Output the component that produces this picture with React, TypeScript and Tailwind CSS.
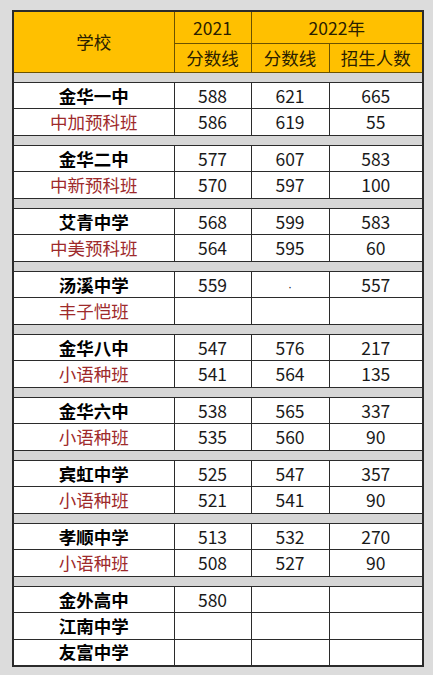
import React from 'react';

type Row = { name: string; a?: string; b?: string; c?: string; sub?: boolean };

const groups: Row[][] = [
  [
    { name: '金华一中', a: '588', b: '621', c: '665' },
    { name: '中加预科班', a: '586', b: '619', c: '55', sub: true },
  ],
  [
    { name: '金华二中', a: '577', b: '607', c: '583' },
    { name: '中新预科班', a: '570', b: '597', c: '100', sub: true },
  ],
  [
    { name: '艾青中学', a: '568', b: '599', c: '583' },
    { name: '中美预科班', a: '564', b: '595', c: '60', sub: true },
  ],
  [
    { name: '汤溪中学', a: '559', b: '·', c: '557' },
    { name: '丰子恺班', sub: true },
  ],
  [
    { name: '金华八中', a: '547', b: '576', c: '217' },
    { name: '小语种班', a: '541', b: '564', c: '135', sub: true },
  ],
  [
    { name: '金华六中', a: '538', b: '565', c: '337' },
    { name: '小语种班', a: '535', b: '560', c: '90', sub: true },
  ],
  [
    { name: '宾虹中学', a: '525', b: '547', c: '357' },
    { name: '小语种班', a: '521', b: '541', c: '90', sub: true },
  ],
  [
    { name: '孝顺中学', a: '513', b: '532', c: '270' },
    { name: '小语种班', a: '508', b: '527', c: '90', sub: true },
  ],
  [
    { name: '金外高中', a: '580' },
    { name: '江南中学' },
    { name: '友富中学' },
  ],
];

const cell = 'border border-[#2b2b2b] p-0 text-center';

export default function App() {
  return (
    <div
      className="min-h-screen bg-[#dcdcdc] pt-[10px] pl-[12px]"
      style={{ fontFamily: '"Noto Sans CJK SC", "Noto Sans", sans-serif' }}
    >
      <table className="w-[410px] border-collapse border-2 border-[#2b2b2b] table-fixed text-[17.5px] leading-none text-[#1a1a1a]">
        <colgroup>
          <col className="w-[161px]" />
          <col className="w-[77px]" />
          <col className="w-[78px]" />
          <col className="w-[94px]" />
        </colgroup>
        <thead className="bg-[#ffc000] text-[#2a2000]">
          <tr className="h-[32px]">
            <th rowSpan={2} className={`${cell} border-[#6b5200] font-normal`}>学校</th>
            <th className={`${cell} border-[#6b5200] font-normal`}>2021</th>
            <th colSpan={2} className={`${cell} border-[#6b5200] font-normal`}>2022年</th>
          </tr>
          <tr className="h-[29px]">
            <th className={`${cell} border-[#6b5200] font-normal`}>分数线</th>
            <th className={`${cell} border-[#6b5200] font-normal`}>分数线</th>
            <th className={`${cell} border-[#6b5200] font-normal`}>招生人数</th>
          </tr>
        </thead>
        <tbody className="bg-white">
          {groups.map((g, gi) => (
            <React.Fragment key={gi}>
              <tr className="h-[10px]">
                <td colSpan={4} className="border border-[#2b2b2b] bg-[#d6d6d6] p-0" />
              </tr>
              {g.map((r, ri) => (
                <tr key={ri} className="h-[26.5px]">
                  <td
                    className={`${cell} ${r.sub ? 'text-[#9e2a2b] font-normal' : 'font-bold text-black'}`}
                  >
                    {r.name}
                  </td>
                  <td className={cell}>{r.a}</td>
                  <td className={cell}>
                    {r.b === '·' ? (
                      <span className="text-[12px] font-['Liberation_Sans']">·</span>
                    ) : (
                      r.b
                    )}
                  </td>
                  <td className={cell}>{r.c}</td>
                </tr>
              ))}
            </React.Fragment>
          ))}
        </tbody>
      </table>
    </div>
  );
}
